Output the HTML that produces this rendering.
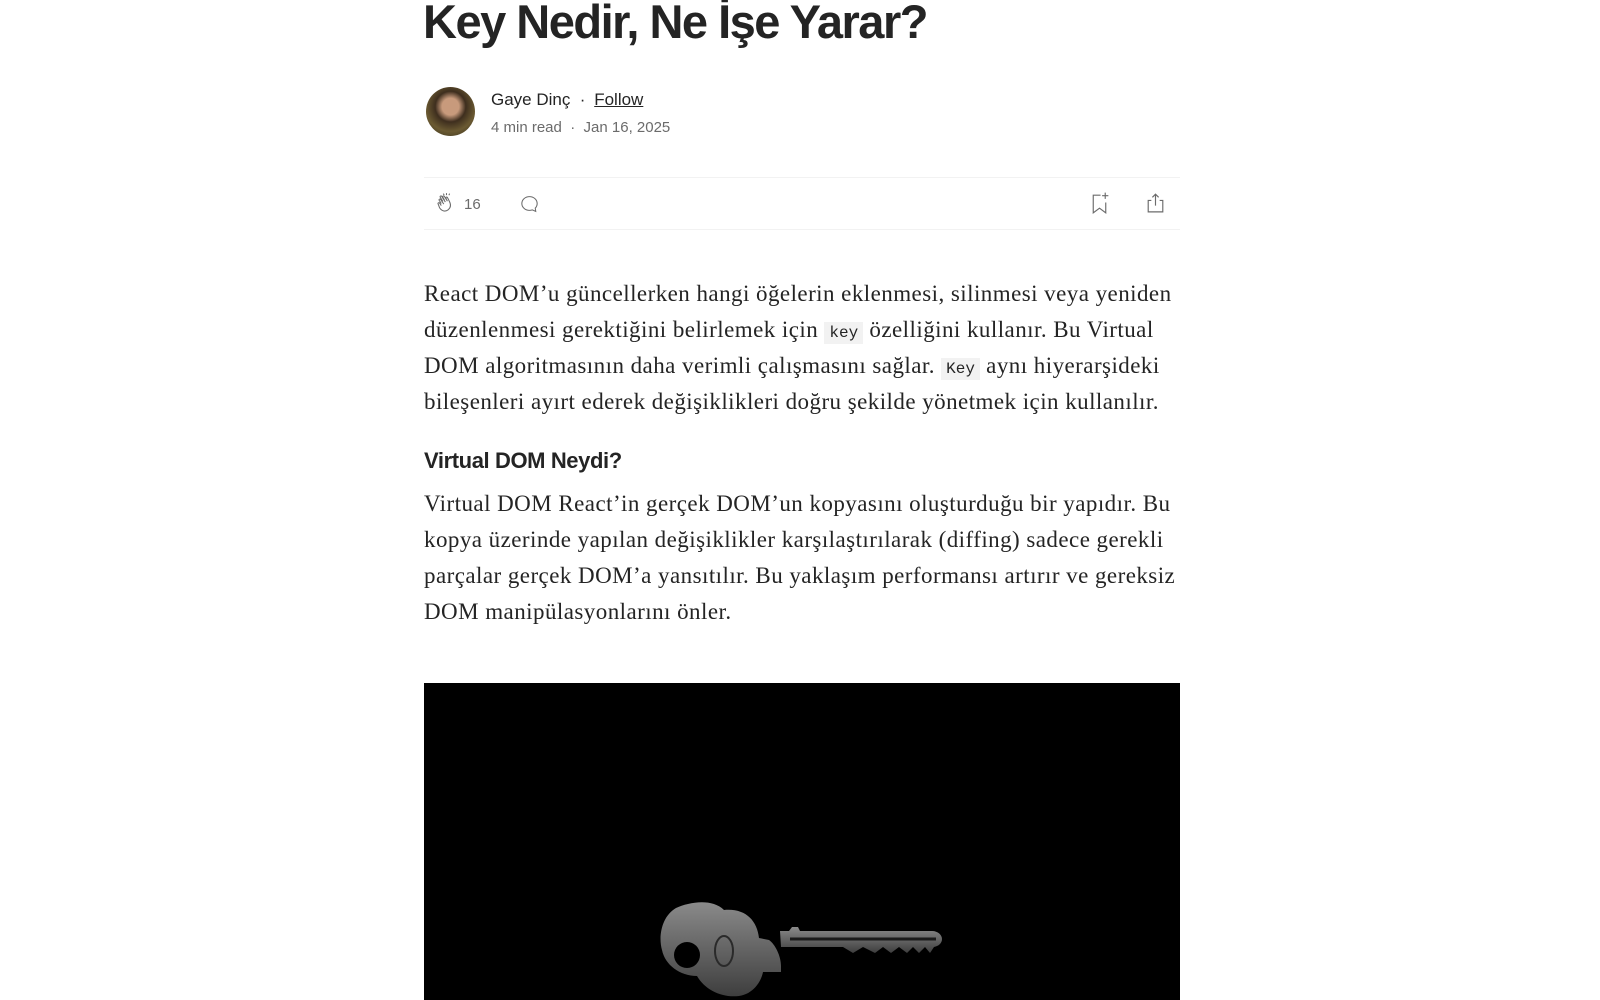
<!DOCTYPE html>
<html><head><meta charset="utf-8"><style>
*{margin:0;padding:0;box-sizing:border-box}
body{width:1600px;height:1000px;overflow:hidden;background:#fff;font-family:"Liberation Sans",sans-serif;color:#242424;position:relative}
.col{position:absolute;left:424px;width:756px}
h1{position:absolute;left:423px;top:-6px;font-size:47px;font-weight:700;letter-spacing:-1.5px;line-height:56px;color:#242424}
.av{position:absolute;left:426px;top:87px;width:49px;height:49px;border-radius:50%;background:radial-gradient(circle at 50% 40%,#c89a7c 0 22%,#3e2e1e 40%,#6b5a32 65%,#2f2a1a)}
.name{position:absolute;left:491px;top:90px;font-size:17px}
.name u{margin-left:4px}
.meta{position:absolute;left:491px;top:119px;font-size:15px;color:#6b6b6b}
.bar{position:absolute;left:424px;top:177px;width:756px;height:53px;border-top:1px solid #f2f2f2;border-bottom:1px solid #f2f2f2}
p{font-family:"Liberation Serif",serif;font-size:23px;line-height:36px;letter-spacing:0.45px;color:#242424}
code{font-family:"Liberation Mono",monospace;font-size:16px;letter-spacing:0;background:#f2f2f2;padding:2px 5px;line-height:20px}
h3{font-size:22px;font-weight:700;letter-spacing:-0.4px;line-height:28px}
.img{position:absolute;left:424px;top:683px;width:756px;height:317px;background:#000;overflow:hidden}
</style></head><body>
<h1>Key Nedir, Ne İşe Yarar?</h1>
<div class="av"></div>
<div class="name">Gaye Dinç &nbsp;·&nbsp;<u>Follow</u></div>
<div class="meta">4 min read &nbsp;·&nbsp; Jan 16, 2025</div>
<div class="bar">
<svg style="position:absolute;left:10px;top:13px" width="25" height="25" viewBox="0 0 24 24" fill="none" stroke="#6b6b6b" stroke-width="1"><path d="M7 12l-2-3c-.6-1 .8-1.8 1.4-.9l3 4.5M8.5 10L6 6c-.6-1 .8-1.8 1.4-.9l3.5 5.5M10 8.5L8.5 6c-.6-1 .8-1.8 1.4-.9l3 4.7M12 8l-.5-1c-.5-1 .9-1.7 1.4-.8l2 4c1.5 3 1 6-1.5 8-2.8 2-6 1-8-2L4 12.5c-.6-1 .8-1.8 1.4-.9L7 14"/><path d="M12 2v2M9 2.5l.7 1.5M15 2.5l-.7 1.5"/></svg>
<span style="position:absolute;left:40px;top:18px;font-size:15px;color:#6b6b6b">16</span>
<svg style="position:absolute;left:94px;top:14px" width="23" height="23" viewBox="0 0 24 24" fill="none" stroke="#6b6b6b" stroke-width="1.1"><path d="M18 16.8c1.3-1.3 2-3 2-4.8 0-4-3.6-7.2-8-7.2s-8 3.2-8 7.2 3.6 7.2 8 7.2c1 0 2-.2 3-.5l3.5 1.5-.5-3.4z"/></svg>
<svg style="position:absolute;left:663px;top:13px" width="25" height="25" viewBox="0 0 24 24" fill="none" stroke="#6b6b6b" stroke-width="1.1"><path d="M17.5 1.5v6M14.5 4.5h6M13 4H6v17l6-4.5 6 4.5V11"/></svg>
<svg style="position:absolute;left:719px;top:12px" width="25" height="25" viewBox="0 0 24 24" fill="none" stroke="#6b6b6b" stroke-width="1.1"><path d="M15 7l-3-3-3 3M12 4v11M8 10H5v11h14V10h-3"/></svg>
</div>
<div class="col" style="top:276px"><p>React DOM’u güncellerken hangi öğelerin eklenmesi, silinmesi veya yeniden düzenlenmesi gerektiğini belirlemek için <code>key</code> özelliğini kullanır. Bu Virtual DOM algoritmasının daha verimli çalışmasını sağlar. <code>Key</code> aynı hiyerarşideki bileşenleri ayırt ederek değişiklikleri doğru şekilde yönetmek için kullanılır.</p></div>
<h3 class="col" style="top:447px">Virtual DOM Neydi?</h3>
<div class="col" style="top:486px"><p>Virtual DOM React’in gerçek DOM’un kopyasını oluşturduğu bir yapıdır. Bu kopya üzerinde yapılan değişiklikler karşılaştırılarak (diffing) sadece gerekli parçalar gerçek DOM’a yansıtılır. Bu yaklaşım performansı artırır ve gereksiz DOM manipülasyonlarını önler.</p></div>
<div class="img">
<svg width="756" height="317" viewBox="0 0 756 317">
<defs><linearGradient id="g" x1="0" y1="0" x2="0" y2="1"><stop offset="0" stop-color="#8a8a8a"/><stop offset="1" stop-color="#3e3e3e"/></linearGradient></defs>
<g transform="translate(-22,20)">
<path d="M322 207c-12-12-35-8-48-2-14 8-18 28-14 42 3 15 18 26 35 26 8 14 25 22 42 20 14-2 22-14 24-24h18v-6c0-10-6-22-12-26l-10-2c-2-18-14-30-35-28z" fill="url(#g)"/>
<path d="M378 228h9l3-4h6l2 4h132c6 0 10 4 10 8 0 4-3 7-8 8l-4 6-5-6-6 6-6-6-6 6-8-6-8 6-8-6-8 6-12-6-10 6-10-6h-62z" fill="url(#g)"/>
<path d="M388 236h146" stroke="#1a1a1a" stroke-width="3"/>
<circle cx="285" cy="252" r="13" fill="#000"/>
<ellipse cx="322" cy="248" rx="9" ry="15" fill="none" stroke="#2a2a2a" stroke-width="2"/>
</g>
</svg>
</div>
</body></html>
